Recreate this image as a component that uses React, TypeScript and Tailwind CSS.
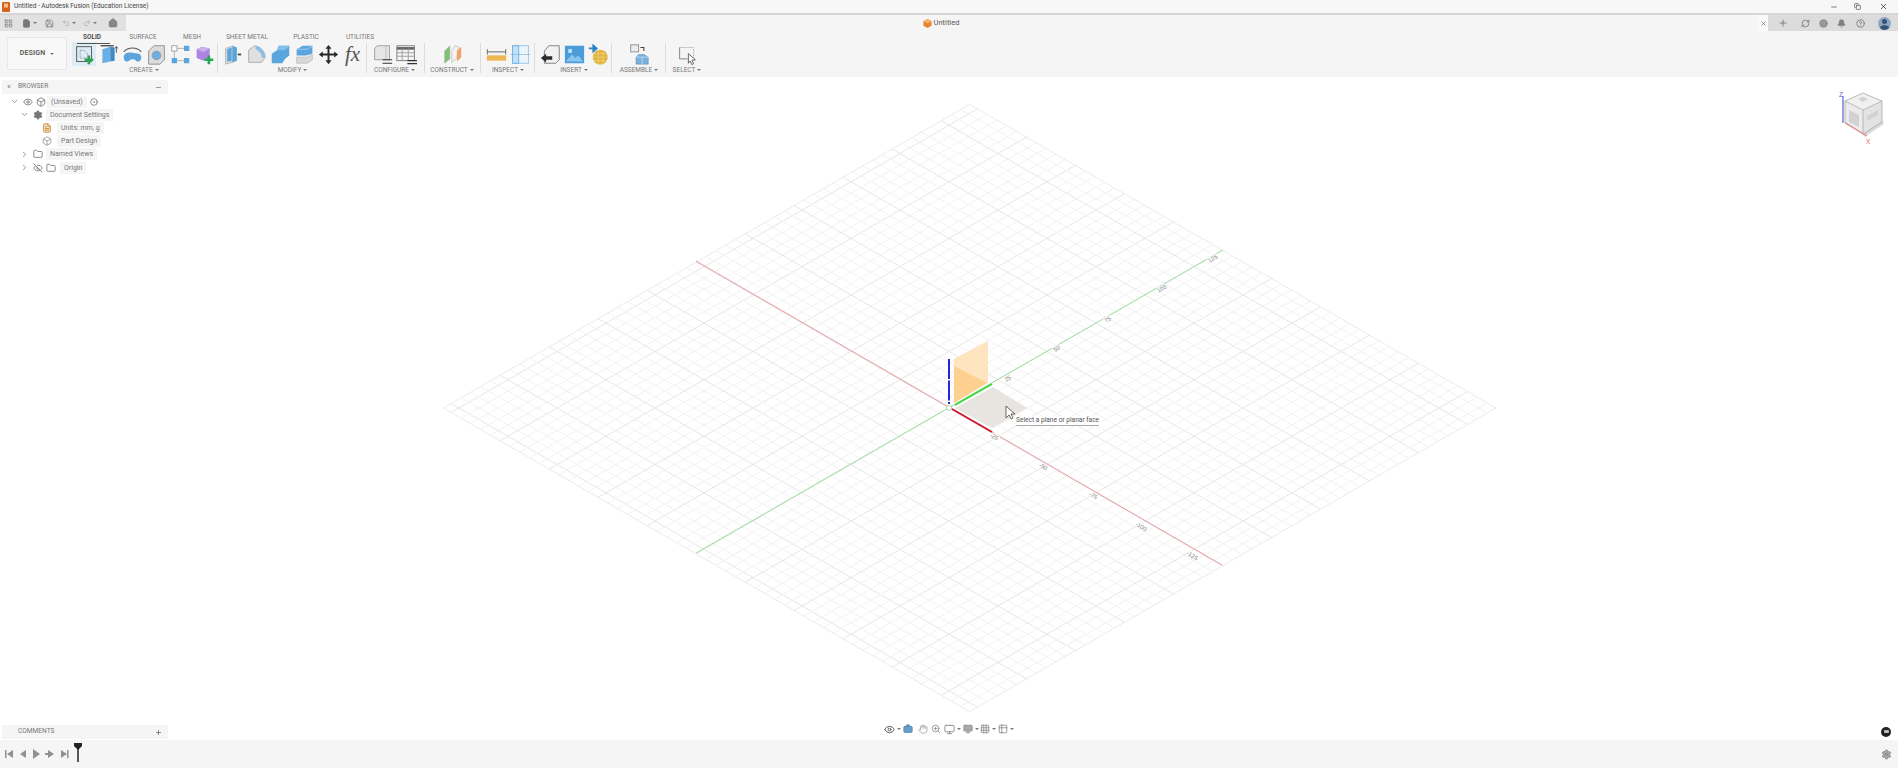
import React from "react";
import { ChevronDown, ChevronRight, Eye, EyeOff, Settings, Folder, Minus, Plus, X, Home, LayoutGrid, Save, Undo2, Redo2, Copy, Bell, CircleHelp, RefreshCw, Briefcase, Hand, ZoomIn, Grid3x3, Monitor, Table2, Circle, CircleDot, File, FileText, Box } from "lucide-react";

const Caret = () => <span className="ml-[2px] inline-block h-0 w-0 border-x-[2px] border-t-[2px] border-x-transparent border-t-[#777]" />;

const I = ({ children, tint }: { children: React.ReactNode; tint?: boolean }) => (
  <div className={`flex h-[24px] w-[24px] items-center justify-center ${tint ? "bg-[#deecf5]" : ""}`}>
    <svg width="21" height="21" viewBox="0 0 24 24">{children}</svg>
  </div>
);
const Blue = "#5aa5de";
const GPlus = () => <path d="M17 13v10M12 18h10" stroke="#2aa457" strokeWidth="3" fill="none" />;

const Ribbon: [string, number, number, number, React.ReactNode[]][] = [
  ["CREATE", 144, 1, 2, [
    <I tint key="a"><rect x="3" y="3" width="17" height="17" fill="none" stroke="#666" strokeWidth="1.2" /><path d="M7 7v9h9M7 7c7 0 9 3 9 9" fill="none" stroke="#999" strokeWidth="1" strokeDasharray="2 1" /><GPlus /></I>,
    <I key="b"><path d="M5 6l9-3v17l-9 2z" fill="#6aafe3" /><path d="M14 3l5 1v15l-5 1z" fill="#3f8ac6" /><path d="M3 2h15" stroke="#444" strokeWidth="1.5" /><path d="M21 10V3M19.5 5L21 3l1.5 2" stroke="#444" strokeWidth="1" fill="none" /></I>,
    <I key="c"><path d="M2 15c0-5 6-6 10-5s10 0 10 5-4 6-6 4-5-2-8 0-6 1-6-4z" fill={Blue} /><path d="M2 9c5-6 15-6 20 0" stroke="#555" strokeWidth="1.2" fill="none" /></I>,
    <I key="d"><path d="M3 8l6-6h12v16l-5 5H3z" fill="#dcdcdc" stroke="#888" /><circle cx="12" cy="13" r="5" fill="#6aafe3" stroke="#999" /></I>,
    <I key="e"><path d="M6 5h12M6 19h12M5 7v10" stroke="#aaa" strokeWidth="1" /><rect x="2" y="2" width="6" height="6" fill="#fff" stroke="#999" /><rect x="16" y="2" width="6" height="6" fill={Blue} /><rect x="2" y="16" width="6" height="6" fill={Blue} /><rect x="16" y="16" width="6" height="6" fill={Blue} /></I>,
    <I key="f"><path d="M3 6l6-3 9 2v11l-7 3-8-3z" fill="#ad84e2" /><path d="M3 6l8 3 7-4-9-2z" fill="#cbb0f0" /><GPlus /></I>,
  ]],
  ["MODIFY", 145, 1, 2, [
    <I key="a"><path d="M4 5l8-3v19l-8 2z" fill="#d5d5d5" stroke="#999" strokeWidth=".6" /><path d="M12 2l5 2v15l-5 2z" fill={Blue} /><path d="M6 6l5-2v15l-5 1z" fill={Blue} /><path d="M18 12h4" stroke="#444" strokeWidth="2" /></I>,
    <I key="b"><path d="M3 21V7l7-5c7 1 12 7 12 13l-4 6z" fill="#e0e0e0" stroke="#aaa" /><path d="M11 2c6 1 11 7 11 13l-4 1c0-5-3-8-7-10z" fill="#8cbfe6" /></I>,
    <I key="c"><path d="M2 22V11l6-4 2-5h12v11l-5 4-3 5z" fill={Blue} /><path d="M8 7l2-5h12l-5 5z" fill="#85c0ea" /></I>,
    <I key="d"><path d="M3 6l7-4h11v9l-7 2H3z" fill={Blue} /><path d="M3 6h12l6-4" stroke="#a9d2f0" fill="none" /><path d="M3 15h12l6-3v6l-6 4H3z" fill="#d8d8d8" stroke="#aaa" strokeWidth=".6" /></I>,
    <I key="e"><path d="M12 1l3.5 4.5h-2.4v5.4h5.4V8.5L23 12l-4.5 3.5v-2.4h-5.4v5.4h2.4L12 23l-3.500-4.500h2.400v-5.400H5.500v2.400L1 12l4.500-3.500v2.400h5.400V5.500H8.500z" fill="#2a2a2a" /></I>,
    <div key="f" className="flex h-[24px] w-[24px] items-center justify-center font-['Liberation_Serif',serif] text-[21px] leading-none text-[#555] italic">fx</div>,
  ]],
  ["CONFIGURE", 51, 4, 3, [
    <I key="a"><path d="M3 5l3-3h14v16H3z" fill="#e6e6e6" stroke="#999" /><path d="M16 2v16" stroke="#bbb" /><path d="M12 18h11M12 22h11" stroke="#333" strokeWidth="1.300" /></I>,
    <I key="b"><rect x="1" y="2" width="20" height="17" fill="#f4f4f4" stroke="#777" /><path d="M1 5h20" stroke="#666" strokeWidth="3" /><path d="M1 10h20M1 14h20M7 5v14M14 5v14" stroke="#999" /><path d="M13 19h11M13 22.500h11" stroke="#333" strokeWidth="1.300" /></I>,
  ]],
  ["CONSTRUCT", 48, 4, 3, [
    <I key="a"><path d="M3 22V8l6-6v15z" fill="#7fc274" stroke="#aaa" strokeWidth=".5" /><path d="M11 21V8l4-6 4 1-2 13z" fill="#f2f2f2" stroke="#aaa" strokeWidth=".6" /><path d="M17 20V8l5-5v12z" fill="#f0a368" /></I>,
  ]],
  ["INSPECT", 48, 2, 3, [
    <I key="a"><rect x="1" y="13" width="22" height="6" fill="#eeb550" /><path d="M2 9h20M1.500 6v6M22.500 6v6" stroke="#555" strokeWidth="1" /></I>,
    <I key="b"><rect x="3" y="2" width="18" height="20" fill="#eef5fa" stroke="#8cc2ea" /><rect x="3" y="2" width="7" height="20" fill="#c3e0f5" stroke="#6aafe3" /><path d="M1 12h22" stroke="#6aafe3" strokeDasharray="2 1" /></I>,
  ]],
  ["INSERT", 72, 1, 3, [
    <I key="a"><path d="M5 8l5-6h12v16l-4 4H5z" fill="#f1f1f1" stroke="#777" /><path d="M1 16l6-5v3h7v4H7v3z" fill="#2a2a2a" /></I>,
    <I key="b"><rect x="1" y="2" width="22" height="20" fill="#4a9cdb" /><circle cx="7" cy="8" r="2.500" fill="#bfe0f6" /><path d="M2 20l7-8 4 4 3-3 6 7z" fill="#8ac5ef" /></I>,
    <I key="c"><circle cx="14" cy="15" r="8.500" fill="#e0b440" /><path d="M7 11h14M6 15h16M7 19h14M12 7v16M17 7v16" stroke="#f5d98b" strokeWidth=".7" /><path d="M1 5h8M6 1.500L10 5 6 8.500z" stroke="#2a85c7" strokeWidth="2" fill="#2a85c7" /></I>,
  ]],
  ["ASSEMBLE", 48, 2, 3, [
    <I key="a"><rect x="2" y="1" width="9" height="8" fill="#ededed" stroke="#888" /><path d="M13 4h4v4" fill="none" stroke="#444" strokeWidth="1.200" /><path d="M11 12h6l5 3v8H8v-8z" fill="#7bb0db" stroke="#5c8db3" strokeWidth=".6" /><path d="M15 15v8M8 15h14" stroke="#d6e8f6" strokeWidth=".8" /></I>,
  ]],
  ["SELECT", 36, 0, 0, [
    <I key="a"><path d="M3 4h16v12" fill="none" stroke="#aaa" strokeWidth="1" strokeDasharray="2 1" /><path d="M3 4v13h9" fill="none" stroke="#777" strokeWidth="1" /><path d="M13 11l8 7-4 .500 2 4-2 1-2-4-2 2.500z" fill="#fff" stroke="#444" strokeWidth=".9" /></I>,
  ]],
];

const Toolbar = () => (
  <div className="flex h-[46px] bg-[#f5f5f5] pl-[7px]">
    <div className="mt-[6px] flex h-[33px] w-[60px] items-center justify-center rounded-[2px] border border-[#e6e6e6] bg-[#f8f8f8] text-[7px] font-semibold tracking-[.2px] text-[#555]">DESIGN<span className="ml-[3px]"><Caret /></span></div>
    <div className="ml-[5px] flex flex-col">
      <div className="flex h-[11px] items-end pb-[1px] text-[6.500px] leading-[8px] text-[#777]">
        <div className="w-[40px] text-center font-semibold text-[#444]">SOLID</div>
        <div className="w-[62px] text-center">SURFACE</div>
        <div className="w-[36px] text-center">MESH</div>
        <div className="w-[74px] text-center">SHEET METAL</div>
        <div className="w-[44px] text-center">PLASTIC</div>
        <div className="w-[64px] text-center">UTILITIES</div>
      </div>
      <div className="relative flex h-[35px] items-start">
        <div className="absolute top-[1px] left-[5px] h-[1px] w-[33px] bg-[#555]" />
        {Ribbon.map(([name, w, ml, mr, icons], n) => (
          <React.Fragment key={name}>
            <div className="flex flex-col items-center" style={{ width: w }}>
              <div className="flex">{icons}</div>
              <div className="flex items-center text-[6.500px] leading-[8px] whitespace-nowrap text-[#777]">{name}<Caret /></div>
            </div>
            {n < Ribbon.length - 1 && <div className="mt-[1px] h-[30px] w-px bg-[#dcdcdc]" style={{ marginLeft: ml, marginRight: mr }} />}
          </React.Fragment>
        ))}
      </div>
    </div>
  </div>
);

const TitleBar = () => (
  <div className="flex h-[13px] items-center bg-[#f7f7f7]">
    <svg className="ml-[2px]" width="8" height="10" viewBox="0 0 8 10"><rect width="8" height="10" rx="1" fill="#d9621c" /><rect x="2" y="1.500" width="4" height="4" fill="#f5c089" /></svg>
    <span className="ml-[4px] text-[6.500px] text-[#444]">Untitled - Autodesk Fusion (Education License)</span>
    <div className="ml-auto flex items-center">
      <Minus size={8} className="mr-[16px] text-[#444]" strokeWidth={2} />
      <Copy size={7} className="mr-[18px] text-[#333]" strokeWidth={2} />
      <X size={9} className="mr-[10px] text-[#333]" strokeWidth={2} />
    </div>
  </div>
);

const TabStrip = () => (
  <div className="flex h-[16px] items-center bg-[#f5f5f5] text-[#777]">
    <div className="flex h-full w-[126px] items-center bg-[#e1e1e1] pl-[4px]">
      <LayoutGrid size={9} />
      <File size={9} className="ml-[9px] fill-[#777]" /><Caret />
      <Save size={9} className="ml-[8px]" />
      <Undo2 size={8} className="ml-[8px] text-[#aaa]" /><Caret />
      <Redo2 size={8} className="ml-[7px] text-[#aaa]" /><Caret />
      <Home size={10} className="ml-[11px] fill-[#888]" />
    </div>
    <div className="flex flex-1 items-center justify-center">
      <div className="ml-[-2px] flex items-center">
        <svg width="9" height="9" viewBox="0 0 10 10"><path d="M5 0l4.500 2.500v5L5 10 .5 7.500v-5z" fill="#e8842c" /><path d="M.5 2.500L5 5l4.500-2.500L5 0z" fill="#f4b06d" /></svg>
        <span className="ml-[2px] text-[7.500px] text-[#555]">Untitled</span>
      </div>
    </div>
    <div className="flex h-full w-[10px] items-center justify-center bg-[#fafafa]"><X size={7} className="text-[#555]" /></div>
    <div className="flex h-full w-[130px] items-center bg-[#dcdcdc] pl-[10px] text-[#808080]">
      <Plus size={10} strokeWidth={2.500} />
      <RefreshCw size={9} className="ml-[13px]" strokeWidth={2.500} />
      <Circle size={9} className="ml-[9px] fill-[#999]" />
      <Bell size={9} className="ml-[9px] fill-[#808080]" />
      <CircleHelp size={9} className="ml-[10px]" strokeWidth={2.500} />
      <div className="ml-[13px] h-[13px] w-[13px] overflow-hidden rounded-full bg-[#8fa6c0]"><div className="mx-auto mt-[2px] h-[5px] w-[5px] rounded-full bg-[#34527a]" /><div className="mx-auto mt-[1px] h-[6px] w-[11px] rounded-t-full bg-[#34527a]" /></div>
    </div>
  </div>
);

const Label = ({ children, ml }: { children: React.ReactNode; ml: string }) => <div className={`${ml} bg-[#f5f5f5] px-[4px] text-[7px] leading-[12px] whitespace-nowrap text-[#777]`}>{children}</div>;

const Browser = () => (
  <div className="absolute top-[3px] left-[2px] w-[166px] text-[#777]">
    <div className="flex h-[14px] items-center bg-[#f5f5f5] pl-[5px] text-[6.600px] text-[#777]">
      <span className="w-[11px] text-[8px] leading-none">«</span>BROWSER<Minus size={7} className="mr-[6px] ml-auto" strokeWidth={2.500} />
    </div>
    <div className="mt-[1px] flex flex-col [&>div]:flex [&>div]:h-[13.200px] [&>div]:items-center">
      <div className="pl-[8px]"><ChevronDown size={9} /><Eye size={10} className="ml-[4px]" /><Box size={10} className="ml-[3px]" /><Label ml="ml-[1px]">(Unsaved)</Label><CircleDot size={8} className="ml-[3px] text-[#555]" /></div>
      <div className="pl-[18px]"><ChevronDown size={9} /><Settings size={10} className="ml-[4px] fill-[#777]" /><Label ml="ml-[3px]">Document Settings</Label></div>
      <div className="pl-[40px]"><FileText size={10} className="fill-[#f6e7cb] text-[#c77f2c]" /><Label ml="ml-[5px]">Units: mm, g</Label></div>
      <div className="pl-[40px]"><Box size={10} className="text-[#999]" /><Label ml="ml-[5px]">Part Design</Label></div>
      <div className="pl-[18px]"><ChevronRight size={9} /><Folder size={10} className="ml-[4px]" /><Label ml="ml-[3px]">Named Views</Label></div>
      <div className="pl-[18px]"><ChevronRight size={9} /><EyeOff size={10} className="ml-[4px]" /><Folder size={10} className="ml-[3px]" /><Label ml="ml-[4px]">Origin</Label></div>
    </div>
  </div>
);

const O = [949, 408];
const P = (u: number, v: number) => [O[0] + (u + v) * 1.96, O[1] + (u - v) * 1.131];
const lines = () => {
  const minU = -129, maxU = 139.5, minV = -129, maxV = 139.5;
  const out: React.ReactNode[] = [];
  for (let m = -125; m <= 135; m += 5) {
    const major = m % 25 === 0;
    const s = major ? "#e6e6e6" : "#f2f2f2";
    const a = P(m, minV), b = P(m, maxV), c = P(minU, m), d = P(maxU, m);
    out.push(<line key={"u" + m} x1={a[0]} y1={a[1]} x2={b[0]} y2={b[1]} stroke={s} strokeWidth="1" />);
    out.push(<line key={"v" + m} x1={c[0]} y1={c[1]} x2={d[0]} y2={d[1]} stroke={s} strokeWidth="1" />);
  }
  return out;
};
const frame = [P(-129, -129), P(-129, 139.5), P(139.5, 139.5), P(139.5, -129)].map((p) => p.join(",")).join(" ");
const gl: [string, number, number, number][] = [["25", 1008, 379, -30], ["50", 1057, 349, -30], ["75", 1108, 320, -30], ["100", 1162, 289, -30], ["125", 1213, 259, -30], ["-25", 994, 437, 30], ["-50", 1043, 467, 30], ["-75", 1093, 496, 30], ["-100", 1141, 527, 30], ["-125", 1192, 556, 30]];

const Scene = () => (
  <svg className="absolute inset-0" width="1898" height="663" viewBox="0 77 1898 663">
    <polygon points={frame} fill="#fff" stroke="#ebebeb" />
    {lines()}
    <line x1="696" y1="261" x2="1222" y2="565" stroke="#e89aa0" strokeWidth="1" />
    <line x1="696" y1="553" x2="1223" y2="250" stroke="#9fdf9f" strokeWidth="1" />
    {gl.map(([t, x, y, r]) => (
      <text key={t} x={x} y={y} transform={`rotate(${r} ${x} ${y})`} textAnchor="middle" dominantBaseline="middle" fontSize="6" fill="#888" fontFamily="Liberation Sans, sans-serif" stroke="#fff" strokeWidth="2" paintOrder="stroke">{t}</text>
    ))}
    <polygon points="955,408 993,387 1027,408 992,428" fill="#e8e5e0" />
    <polygon points="954,359 988,341 988,383 954,403" fill="#fee4bf" />
    <polygon points="954,366 987,383 954,403" fill="#fdd090" />
    <line x1="955" y1="405" x2="992" y2="384" stroke="#3ed63e" strokeWidth="2" />
    <line x1="952" y1="409" x2="992" y2="432" stroke="#d0182f" strokeWidth="2" />
    <line x1="949" y1="359" x2="949" y2="404" stroke="#2626d8" strokeWidth="2" strokeDasharray="20 1.500" />
    <circle cx="949" cy="408" r="2.500" fill="#fff" stroke="#9bc79b" strokeWidth=".8" />
    <path d="M1006 406l0 12 3-3 2 4 2-1-2-4 4 0z" fill="#fff" stroke="#444" strokeWidth=".8" />
  </svg>
);

const ViewCube = () => (
  <svg className="absolute top-[14px] right-[10px]" width="50" height="56" viewBox="1838 91 50 56">
    <path d="M1864 137l20-13-2-4-19 14z" fill="#d8d8d8" />
    <path d="M1863 134l19-12V101l-19 9z" fill="#e3e3e3" />
    <path d="M1863 134l-18-12v-21l18 9z" fill="#ebebeb" />
    <path d="M1845 101l18 9 19-9-19-8z" fill="#f0f0f0" stroke="#aaa" strokeWidth=".8" />
    <path d="M1863 110v24M1845 101v21l18 12 19-12v-21" fill="none" stroke="#aaa" strokeWidth=".8" />
    <path d="M1849 110l10 5v12l-10-5zM1867 121l11-6v-5l-11 6zM1858 99l5-2 5 2-5 3z" fill="#d2d2d2" />
    <path d="M1843 96v27" stroke="#5c5cd6" strokeWidth="1.200" />
    <path d="M1845 123l22 13" stroke="#e58a8a" strokeWidth="1.200" />
    <text x="1839" y="97" fontSize="6.500" fill="#5c5cd6" fontFamily="Liberation Sans, sans-serif">Z</text>
    <text x="1866" y="144" fontSize="6.500" fill="#e06a6a" fontFamily="Liberation Sans, sans-serif">X</text>
  </svg>
);

const Nav = () => (
  <div className="absolute bottom-[4px] left-[884px] flex h-[14px] items-center text-[#8a8a8a]">
    <Eye size={11} className="text-[#555]" /><Caret />
    <Briefcase size={10} className="ml-[2px] fill-[#6a9ec8] text-[#4f88b5]" />
    <Hand size={10} className="ml-[5px] text-[#aaa]" />
    <ZoomIn size={10} className="ml-[3px]" />
    <Monitor size={11} className="ml-[3px]" /><Caret />
    <Monitor size={10} className="ml-[2px] fill-[#aaa]" /><Caret />
    <Grid3x3 size={10} className="ml-[1px]" /><Caret />
    <Table2 size={10} className="ml-[2px]" /><Caret />
  </div>
);

const Comments = () => (
  <div className="absolute bottom-[1px] left-[2px] flex h-[14px] w-[166px] items-center bg-[#f5f5f5] pl-[16px] text-[6.600px] text-[#777]">
    COMMENTS<Plus size={7} strokeWidth={3} className="mr-[6px] ml-auto" />
  </div>
);

const Timeline = () => (
  <div className="flex h-[28px] items-center bg-[#f5f5f5] pl-[5px]">
    <svg width="70" height="10" viewBox="0 0 70 10" fill="#909090">
      <path d="M0 1h1.500v8H0zM8 1v8L2 5zM21 1v8l-6-4zM28 0l7 5-7 5zM43 1v8l6-4zM43 4H40v2h3zM56 1v8l6-4zM62 1h1.500v8H62z" />
    </svg>
    <svg className="mt-[-2px] ml-[-1px]" width="8" height="20" viewBox="0 0 8 20"><path d="M0 0h8v3L4 7 0 3z" fill="#222" /><path d="M4 6v13" stroke="#222" strokeWidth="1.500" /></svg>
    <Settings size={11} className="mr-[6px] ml-auto fill-[#aaa] text-[#888]" />
  </div>
);

export default function App() {
  return (
    <div className="flex h-[768px] w-[1898px] flex-col overflow-hidden bg-white font-['Roboto','Liberation_Sans',sans-serif]">
      <TitleBar />
      <div className="h-[2px] bg-[#d6d6d6]" />
      <TabStrip />
      <Toolbar />
      <div className="relative flex-1 bg-white">
        <Scene />
        <Browser />
        <ViewCube />
        <div className="absolute top-[339px] left-[1016px] border-b border-[#aaa] bg-white text-[6.600px] leading-[9px] whitespace-nowrap text-[#555]">Select a plane or planar face</div>
        <Nav />
        <Comments />
        <div className="absolute right-[7px] bottom-[3px] h-[10px] w-[10px] rounded-full bg-[#222]"><div className="mt-[3px] ml-[3px] h-[3px] w-[5px] rounded-[1px] bg-[#bbb]" /></div>
      </div>
      <Timeline />
    </div>
  );
}
